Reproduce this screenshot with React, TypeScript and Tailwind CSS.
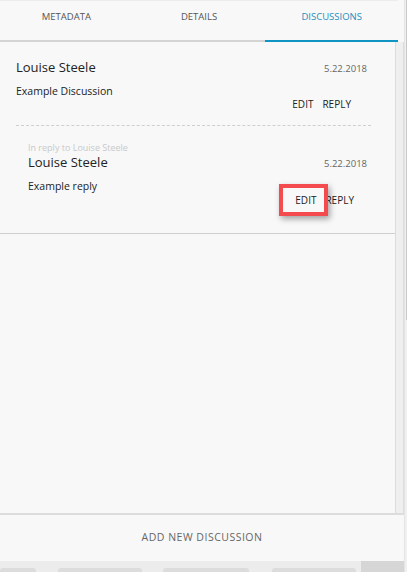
import React from 'react';

const font = { fontFamily: '"Open Sans", "Noto Sans", sans-serif' };

function Tabs() {
  const tabs = ['METADATA', 'DETAILS', 'DISCUSSIONS'];
  return (
    <div className="flex h-[42px] w-[398px] border-b-2 border-[#d4d4d4] border-t border-t-[#ececec]">
      {tabs.map((t) => {
        const active = t === 'DISCUSSIONS';
        return (
          <div
            key={t}
            className={`relative flex-1 flex justify-center pt-[9px] text-[9.5px] ${active ? 'text-[#1f8fbf]' : 'text-[#555]'}`}
          >
            {t}
            {active && <div className="absolute left-0 right-0 -bottom-[2px] h-[2px] bg-[#0f94c4]" />}
          </div>
        );
      })}
    </div>
  );
}

function Comment({ reply, highlight }: { reply?: boolean; highlight?: boolean }) {
  return (
    <div className={reply ? 'pl-[28px] pr-[28px]' : 'pl-[16px] pr-[28px]'}>
      {reply && <div className="text-[9px] leading-[10px] text-[#c8c8c8] mt-[1px]">In reply to Louise Steele</div>}
      <div className="flex items-baseline justify-between">
        <div className="text-[13px] leading-[18px] text-[#222]">Louise Steele</div>
        <div className="text-[9.5px] text-[#666]">5.22.2018</div>
      </div>
      <div className={`text-[10.5px] leading-[14px] text-[#222] ${reply ? 'mt-[7px]' : 'mt-[8px]'}`}>
        {reply ? 'Example reply' : 'Example Discussion'}
      </div>
      <div className={`flex justify-end gap-[9px] text-[10px] text-[#222] ${reply ? 'pr-[13px] mt-0' : 'pr-[16px] -mt-[1px]'}`}>
        <span className="relative">
          EDIT
          {highlight && (
            <span className="absolute -left-[16px] -right-[12px] -top-[9px] -bottom-[8px] border-[4px] border-[#f44b4f] shadow-[2px_3px_6px_rgba(0,0,0,0.35)]" />
          )}
        </span>
        <span>REPLY</span>
      </div>
    </div>
  );
}

export default function App() {
  return (
    <div className="relative flex w-[407px] h-[572px] bg-[#f8f8f8] overflow-hidden" style={font}>
      <div className="flex flex-col w-[404px]">
        <Tabs />
        <div className="flex flex-1 min-h-0">
          <div className="flex-1">
            <div className="border-b border-[#d0d0d0] pt-[16px] pb-[25px]">
              <Comment />
              <div className="ml-[16px] mr-[24px] mt-[13px] mb-[17px] border-t border-dashed border-[#cfcfcf]" />
              <Comment reply highlight />
            </div>
          </div>
          <div className="w-[9px] bg-[#efefef] border-x border-[#dcdcdc]" />
        </div>
        <div className="h-[48px] border-t-2 border-[#dcdcdc] flex items-center justify-center text-[10.5px] tracking-[0.5px] text-[#666]">
          ADD NEW DISCUSSION
        </div>
        <div className="h-[11px] bg-[#ececec] flex items-end">
          <div className="w-[36px] h-[4px] bg-[#dcdcdc] rounded-t-[3px]" />
          <div className="w-[84px] h-[4px] bg-[#dcdcdc] rounded-t-[3px] ml-[22px]" />
          <div className="w-[86px] h-[4px] bg-[#dcdcdc] rounded-t-[3px] ml-[21px]" />
          <div className="w-[84px] h-[4px] bg-[#dcdcdc] rounded-t-[3px] ml-[23px]" />
          <div className="w-[43px] h-[11px] bg-[#d6d6d6] ml-auto" />
        </div>
      </div>
      <div className="w-[3px] bg-[#f0f0f0] flex">
        <div className="w-[1px] bg-[#e4e4e4]" />
        <div className="flex-1" />
        <div className="w-[1px] h-[320px] bg-[#c8c8c8]" />
      </div>
    </div>
  );
}
